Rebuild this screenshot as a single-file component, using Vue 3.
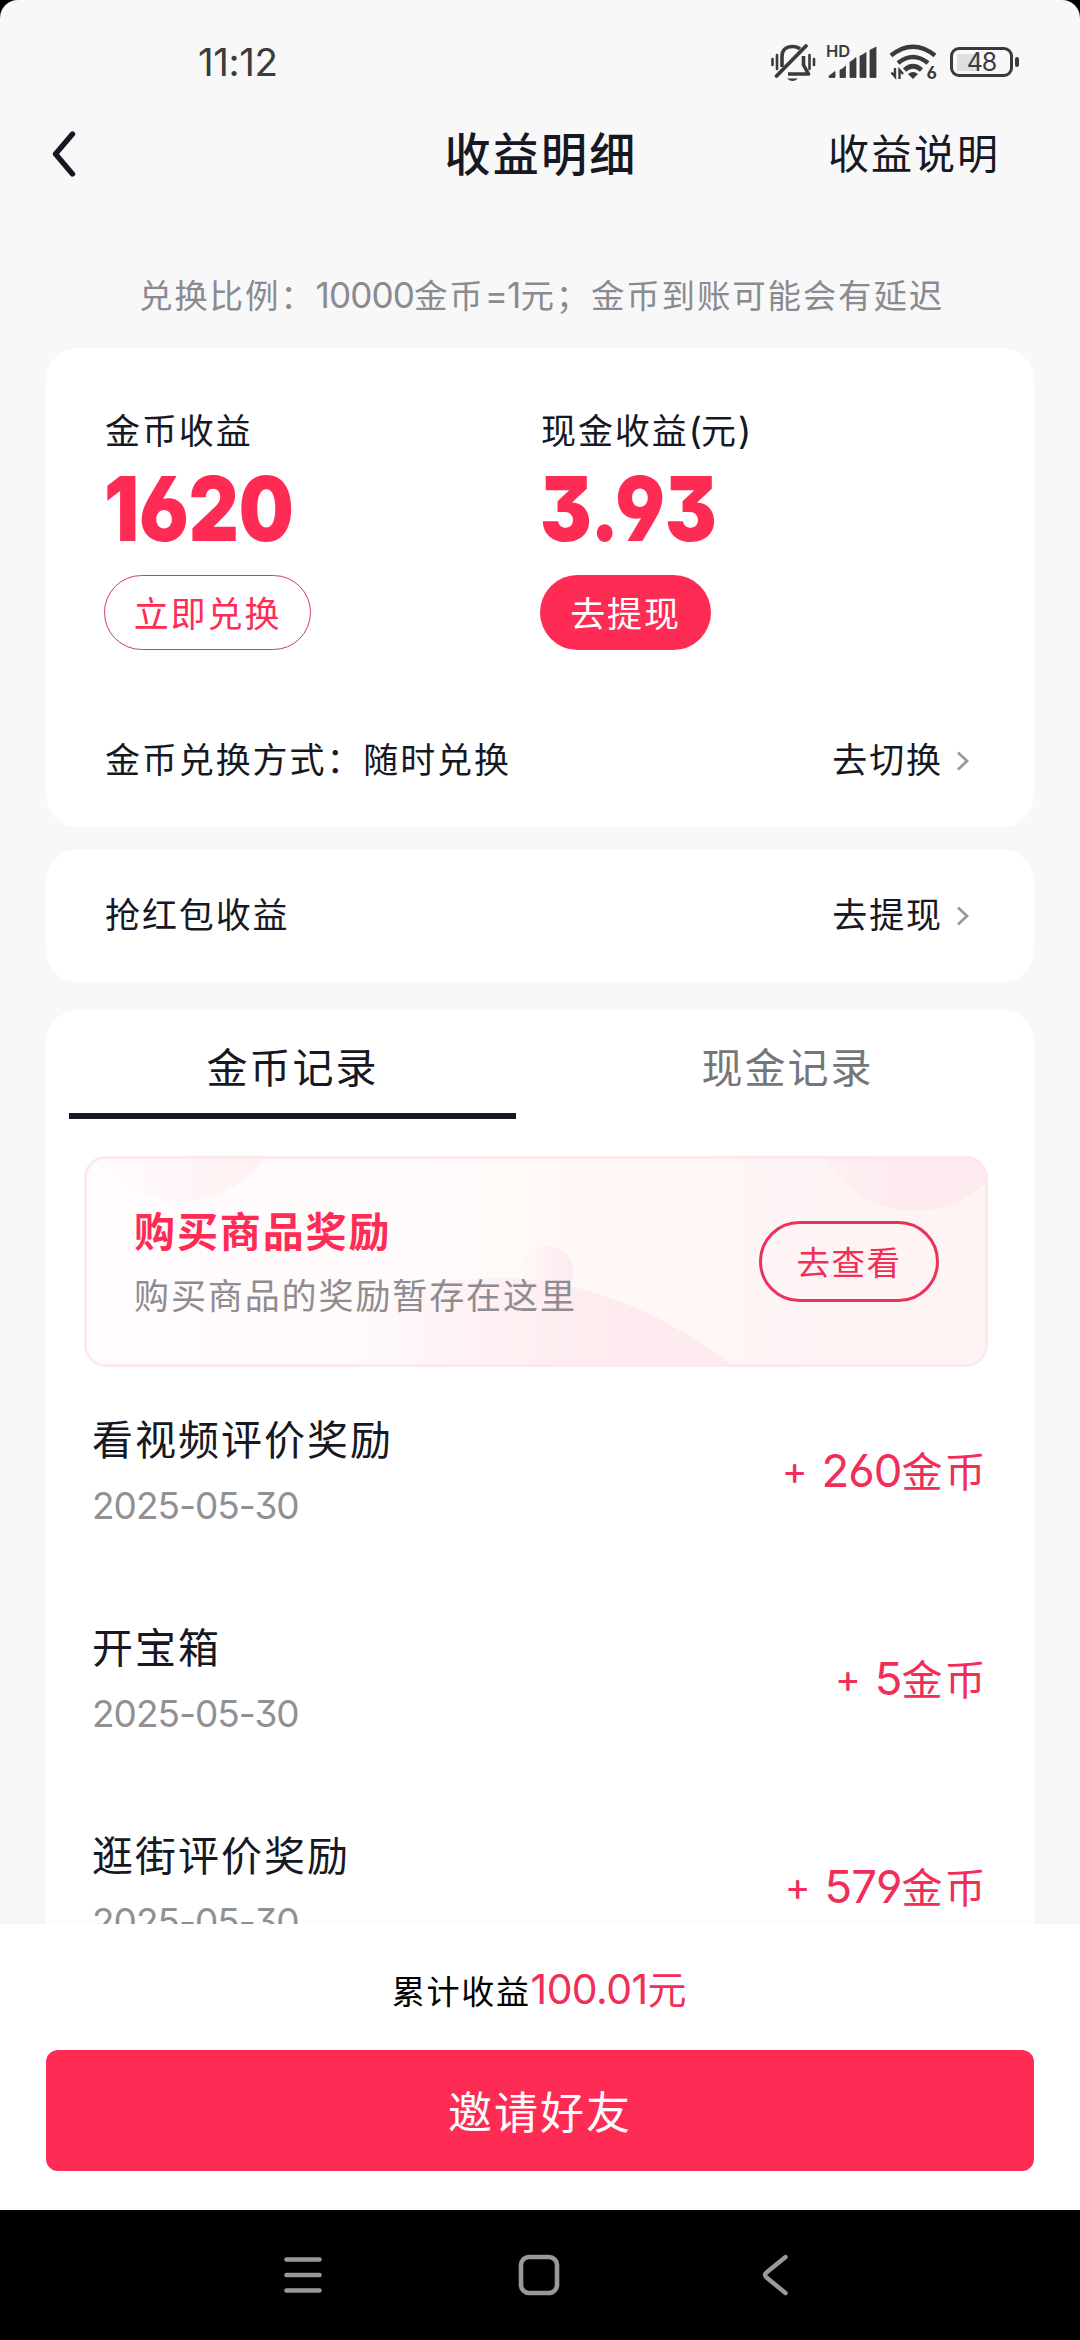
<script setup>
const records = [
  { title: '看视频评价奖励', date: '2025-05-30', amount: '260' },
  { title: '开宝箱', date: '2025-05-30', amount: '5' },
  { title: '逛街评价奖励', date: '2025-05-30', amount: '579' },
]
</script>

<template>
  <div class="screen">
    <div class="status">
      <span class="clock">11:12</span>
      <div class="indicators">
        <svg class="bell" width="46" height="42" viewBox="0 0 46 42" fill="none" stroke="#3b3b3b">
          <path d="M12 26V15.500C12 9 16 5.500 22.500 5.500C25 5.500 28 6 30 8" stroke-width="3.600" />
          <path d="M33.500 15V24L38.500 33H18" stroke-width="3.600" stroke-linejoin="round" />
          <path d="M6.500 35L36 5" stroke-width="3.800" stroke-linecap="round" />
          <path d="M17 37.500H28Q22.500 42.500 17 37.500Z" fill="#3b3b3b" stroke="none" />
          <path d="M2.500 18V24M7 14V28M39.500 14V28M44 18V24" stroke-width="2.600" stroke-linecap="round" />
        </svg>
        <div class="signal">
          <span class="hd">HD</span>
          <svg width="50" height="34" viewBox="0 0 50 34" fill="#3b3b3b">
            <path d="M1 32.500V31L7 26.500V32.500ZM12 32.500V25Q15 24 17.500 21V32.500ZM22 32.500V17Q25 15.500 28 12.500V32.500ZM32 32.500V11Q35 10 38 7.500V32.500ZM42 32.500V5Q45 4 48 2V32.500Z" stroke="#3b3b3b" stroke-width=".8" stroke-linejoin="round" />
          </svg>
        </div>
        <div class="wifi">
          <svg width="48" height="38" viewBox="0 0 48 38" fill="none" stroke="#3b3b3b">
            <path d="M2 12.500Q24-5 46 12.500" stroke-width="4.600" />
            <path d="M9 20Q24 8 39 20" stroke-width="4.600" />
            <path d="M15.500 27Q24 19.500 32.500 27" stroke-width="4.600" />
            <path d="M19 31Q24 27 29 31L24 36Z" fill="#3b3b3b" stroke="none" />
            <path d="M2.500 29.500L6 33.500V25M10.500 36V27L14 31" stroke-width="2.400" />
          </svg>
          <span class="gen">6</span>
        </div>
        <div class="battery">
          <div class="cell"><span>48</span></div>
          <i class="nub"></i>
        </div>
      </div>
    </div>

    <header class="header">
      <svg class="back" width="26" height="50" viewBox="0 0 26 50" fill="none" stroke="#161823" stroke-width="5.400" stroke-linecap="round" stroke-linejoin="round">
        <path d="M20.500 5L3.500 25L20.500 45" />
      </svg>
      <h1>收益明细</h1>
      <a class="explain">收益说明</a>
    </header>

    <p class="notice">兑换比例：<span class="num">10000</span>金币<span class="num">=1</span>元；金币到账可能会有延迟</p>

    <section class="card summary">
      <div class="columns">
        <div class="column">
          <div class="label">金币收益</div>
          <div class="total">1620</div>
          <button class="pill outline">立即兑换</button>
        </div>
        <div class="column">
          <div class="label">现金收益<span class="num">(</span>元<span class="num">)</span></div>
          <div class="total">3.93</div>
          <button class="pill solid">去提现</button>
        </div>
      </div>
      <div class="line">
        <span>金币兑换方式：随时兑换</span>
        <a class="go">去切换
          <svg width="14" height="22" viewBox="0 0 14 22" fill="none" stroke="#9a9a9c" stroke-width="2.800"><path d="M2 2.500L11 11L2 19.500" /></svg>
        </a>
      </div>
    </section>

    <section class="card packet">
      <div class="line">
        <span>抢红包收益</span>
        <a class="go">去提现
          <svg width="14" height="22" viewBox="0 0 14 22" fill="none" stroke="#9a9a9c" stroke-width="2.800"><path d="M2 2.500L11 11L2 19.500" /></svg>
        </a>
      </div>
    </section>

    <section class="card history">
      <nav class="tabs">
        <a class="tab active">金币记录</a>
        <a class="tab">现金记录</a>
      </nav>

      <div class="banner">
        <svg class="decor" width="898" height="205" viewBox="0 0 898 205">
          <defs>
            <linearGradient id="base" x1="0" y1="0" x2="1" y2="0">
              <stop offset="0" stop-color="#fffcfd" />
              <stop offset=".35" stop-color="#fffbfb" />
              <stop offset=".55" stop-color="#fff8f6" />
              <stop offset=".8" stop-color="#fff4f5" />
              <stop offset="1" stop-color="#fff4f4" />
            </linearGradient>
            <linearGradient id="hill" x1="0" y1="0" x2="1" y2="0">
              <stop offset=".1" stop-color="#feebef" stop-opacity="0" />
              <stop offset=".75" stop-color="#feebef" />
              <stop offset="1" stop-color="#feebef" />
            </linearGradient>
            <linearGradient id="cap" x1="0" y1="0" x2="1" y2="0">
              <stop offset="0" stop-color="#fff0f1" stop-opacity="0" />
              <stop offset="1" stop-color="#fff0f1" />
            </linearGradient>
            <linearGradient id="bubble" x1="0" y1="0" x2="1" y2="0">
              <stop offset="0" stop-color="#fde9ef" stop-opacity="0" />
              <stop offset="1" stop-color="#fde9ef" />
            </linearGradient>
            <linearGradient id="moon" x1="0" y1="0" x2="1" y2="0">
              <stop offset="0" stop-color="#fdebef" stop-opacity=".3" />
              <stop offset=".4" stop-color="#fdebef" />
            </linearGradient>
          </defs>
          <rect width="898" height="205" fill="url(#base)" />
          <circle cx="96" cy="-55" r="97" fill="url(#cap)" />
          <circle cx="828" cy="-52" r="104" fill="url(#moon)" />
          <circle cx="460" cy="113" r="26" fill="url(#bubble)" />
          <path d="M190 205Q290 119 410 119Q530 119 643 205Z" fill="url(#hill)" />
        </svg>
        <div class="banner-text">
          <div class="banner-title">购买商品奖励</div>
          <div class="banner-sub">购买商品的奖励暂存在这里</div>
        </div>
        <button class="view">去查看</button>
      </div>

      <ul class="records">
        <li v-for="record in records" :key="record.title" class="record">
          <div class="info">
            <div class="name">{{ record.title }}</div>
            <div class="date">{{ record.date }}</div>
          </div>
          <div class="amount"><span class="plus">+</span><span class="num">{{ record.amount }}</span>金币</div>
        </li>
      </ul>
    </section>

    <footer class="footer">
      <div class="sum">累计收益<span class="sum-value"><span class="num">100.01</span>元</span></div>
      <button class="invite">邀请好友</button>
    </footer>

    <div class="sysnav">
      <svg width="40" height="42" viewBox="0 0 40 42" stroke="#999" stroke-width="4.600" stroke-linecap="round"><path d="M3.500 5.500H36.500M3.500 21H36.500M3.500 36.500H36.500" /></svg>
      <svg width="42" height="42" viewBox="0 0 42 42" fill="none" stroke="#999" stroke-width="4.600"><rect x="3" y="3" width="36" height="36" rx="8" /></svg>
      <svg width="28" height="42" viewBox="0 0 28 42" fill="none" stroke="#999" stroke-width="4.400" stroke-linecap="round" stroke-linejoin="round"><path d="M24.500 3L5.500 18.500Q2.500 21 5.500 23.500L24.500 39" /></svg>
    </div>
  </div>
</template>

<style>
html,
body {
  margin: 0;
  background: #000;
}
</style>

<style scoped>
.screen {
  width: 1080px;
  height: 2340px;
  display: flex;
  flex-direction: column;
  overflow: hidden;
  border-radius: 18px 18px 0 0;
  background: #f8f8f8;
  color: #161823;
  font-family: Inter, "Noto Sans CJK SC", sans-serif;
  font-size: 35px;
  letter-spacing: 1.9px;
}

h1,
p,
ul {
  margin: 0;
  padding: 0;
  font-weight: 400;
  list-style: none;
}

button {
  box-sizing: border-box;
  padding: 0 0 2px;
  border: 0;
  background: none;
  font: inherit;
  letter-spacing: inherit;
}

.num {
  font-size: 1.05em;
  line-height: 1;
  letter-spacing: -1px;
  font-feature-settings: "cv03", "cv04", "cv09";
}

.status {
  flex: none;
  height: 124px;
  padding: 0 61px 0 198px;
  display: flex;
  align-items: center;
  justify-content: space-between;
  color: #3b3b3b;
}

.clock {
  font-size: 38.500px;
  line-height: 50px;
  letter-spacing: -.4px;
}

.indicators {
  display: flex;
  align-items: center;
}

.bell {
  margin-right: 12px;
}

.signal {
  position: relative;
  display: flex;
  width: 50px;
  margin-right: 11px;
}

.hd {
  position: absolute;
  left: -2px;
  top: -4px;
  font-size: 16.500px;
  line-height: 20px;
  font-weight: 600;
  letter-spacing: 0;
}

.wifi {
  position: relative;
  display: flex;
  margin-right: 13px;
}

.gen {
  position: absolute;
  right: 0;
  bottom: -1px;
  font-size: 17px;
  line-height: 18px;
  font-weight: 700;
  letter-spacing: 0;
  font-feature-settings: "cv03";
}

.battery {
  display: flex;
  align-items: center;
  gap: 2px;
}

.cell {
  box-sizing: border-box;
  width: 63px;
  height: 30px;
  padding: 3px 4px;
  border: 3px solid #3b3b3b;
  border-radius: 9px;
  background: linear-gradient(#dedede, #dedede) 4px center / 23px 17px no-repeat;
  display: flex;
  align-items: center;
  justify-content: center;
  font-size: 25px;
  line-height: 24px;
  letter-spacing: -1px;
}

.nub {
  width: 4px;
  height: 10px;
  border-radius: 2px;
  background: #3b3b3b;
}

.header {
  flex: none;
  height: 60px;
  display: grid;
  grid-template-columns: 1fr auto 1fr;
  align-items: center;
  padding: 0 80px 0 52px;
}

.back {
  display: block;
}

.header h1 {
  padding-left: 30px;
  font-size: 46px;
  line-height: 60px;
  font-weight: 500;
  letter-spacing: 2.300px;
}

.explain {
  justify-self: end;
  font-size: 41px;
  line-height: 60px;
  letter-spacing: 2px;
}

.notice {
  flex: none;
  margin: 85px 0 25px 139px;
  font-size: 33.500px;
  line-height: 54px;
  letter-spacing: 1.800px;
  color: #8a8b91;
  white-space: nowrap;
}

.notice .num {
  letter-spacing: -.9px;
}

.card {
  flex: none;
  box-sizing: border-box;
  margin: 0 46px;
  border-radius: 32px;
  background: #fff;
}

.summary {
  height: 479px;
  padding: 59px 58px 0;
}

.columns {
  display: grid;
  grid-template-columns: 436px 1fr;
}

.label {
  padding-left: 1px;
  line-height: 48px;
}

.total {
  margin: 17px 0 30px;
  font-size: 90px;
  line-height: 73px;
  font-weight: 900;
  letter-spacing: 0;
  transform: scaleX(.86);
  transform-origin: left center;
  color: #fe2c55;
  font-feature-settings: "cv03", "cv04", "cv09";
}

.pill {
  height: 75px;
  border-radius: 38px;
}

.outline {
  width: 207px;
  border: 1px solid #d8395b;
  color: #fe2c55;
}

.solid {
  width: 171px;
  background: #fe2c55;
  color: #fff;
}

.line {
  display: flex;
  align-items: center;
  justify-content: space-between;
  padding-left: 1px;
  line-height: 51px;
}

.summary .line {
  margin-top: 85px;
}

.go {
  display: flex;
  align-items: center;
  gap: 13px;
  margin-right: 6px;
}

.packet {
  height: 133px;
  margin-top: 22px;
  padding: 41px 58px 0;
}

.history {
  flex: 1;
  min-height: 0;
  margin-top: 28px;
  padding: 0 23px;
  border-radius: 32px 32px 0 0;
  overflow: hidden;
}

.tabs {
  display: grid;
  grid-template-columns: 447px 447px;
  gap: 48px;
}

.tab {
  padding: 29px 0 15px;
  border-bottom: 6px solid transparent;
  font-size: 41px;
  line-height: 59px;
  letter-spacing: 2px;
  text-align: center;
  color: #75767c;
}

.tab.active {
  border-color: #161823;
  color: #161823;
}

.banner {
  position: relative;
  box-sizing: border-box;
  height: 211px;
  margin: 37px 23px 0 15px;
  padding: 0 46px 0 47px;
  display: flex;
  align-items: center;
  justify-content: space-between;
  overflow: hidden;
  border: 3px solid #fde8ed;
  border-radius: 22px;
}

.decor {
  position: absolute;
  left: 0;
  top: 0;
}

.banner-text,
.view {
  position: relative;
}

.banner-title {
  font-size: 41px;
  line-height: 60px;
  font-weight: 700;
  letter-spacing: 1.900px;
  color: #fe2c55;
}

.banner-sub {
  margin-top: 8px;
  line-height: 52px;
  color: #8f8c91;
}

.view {
  width: 180px;
  height: 81px;
  border: 3px solid #e8345a;
  border-radius: 41px;
  font-size: 33.500px;
  letter-spacing: 1.500px;
  color: #f02e57;
}

.records {
  padding: 0 23px 0 23px;
}

.record {
  height: 208px;
  display: flex;
  align-items: center;
  justify-content: space-between;
}

.name {
  font-size: 41px;
  line-height: 60px;
  letter-spacing: 2px;
}

.date {
  margin-top: 9px;
  font-size: 37px;
  line-height: 53px;
  letter-spacing: -1px;
  color: #919195;
  font-feature-settings: "cv03", "cv04", "cv09";
}

.amount {
  padding-top: 2px;
  font-size: 41px;
  line-height: 60px;
  letter-spacing: 2.300px;
  color: #f02e57;
}

.amount .num {
  font-size: 45.500px;
}

.plus {
  position: relative;
  top: -2px;
  margin-right: 14px;
  font-size: 39px;
  letter-spacing: 0;
}

.footer {
  flex: none;
  box-sizing: border-box;
  height: 286px;
  padding: 38px 46px 0;
  background: #fff;
  box-shadow: 0 0 5px rgba(0, 0, 0, .05);
  z-index: 1;
}

.sum {
  font-size: 33px;
  line-height: 60px;
  letter-spacing: 1.700px;
  text-align: center;
  color: #000;
}

.sum-value {
  font-size: 39px;
  line-height: 1;
  color: #f02e57;
}

.sum-value .num {
  letter-spacing: -.6px;
}

.invite {
  display: block;
  width: 100%;
  height: 121px;
  margin-top: 28px;
  border-radius: 12px;
  background: #fe2c55;
  font-size: 44px;
  letter-spacing: 2px;
  color: #fff;
}

.sysnav {
  flex: none;
  height: 130px;
  display: flex;
  align-items: center;
  padding-left: 283px;
  background: #000;
}

.sysnav svg + svg {
  margin-left: 195px;
}

.sysnav svg + svg + svg {
  margin-left: 201px;
}
</style>
